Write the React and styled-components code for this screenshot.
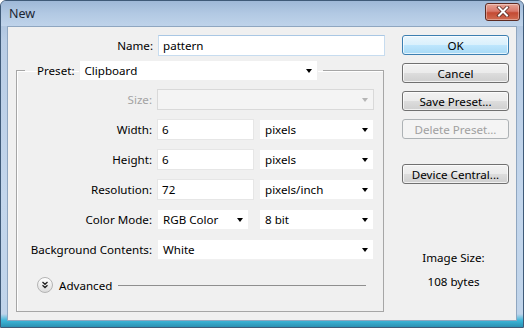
import React from 'react';
import styled, { createGlobalStyle } from 'styled-components';

const GlobalStyle = createGlobalStyle`
  html, body {
    margin: 0;
    padding: 0;
    background: #ffffff;
  }
  body {
    font-family: 'Noto Sans', 'Open Sans', sans-serif;
    font-size: 11.6px;
    color: #000000;
  }
`;

const Window = styled.div`
  width: 524px;
  height: 328px;
  box-sizing: border-box;
  display: flex;
  flex-direction: column;
  border: 1px solid #3f5a78;
  border-radius: 6px 6px 0 0;
  background: linear-gradient(to bottom, #a3bcd9 0%, #b9cde5 12%, #c3d6ec 60%, #c0d4ea 96%, #3cb6d8 98%, #2b90b2 100%);
  overflow: hidden;
`;

const TitleBar = styled.div`
  height: 25px;
  flex: none;
  display: flex;
  align-items: center;
  justify-content: space-between;
  padding: 0 3px 0 8px;
  background: linear-gradient(to bottom, #9eb8d7 0%, #b2c9e3 50%, #bfd3ea 100%);
  font-size: 12.5px;
  color: #1b2633;
`;

const CloseButton = styled.div`
  width: 33px;
  height: 16px;
  margin-top: -4px;
  border: 1px solid #5d2b22;
  border-radius: 3px;
  background: linear-gradient(to bottom, #e6a596 0%, #d8786a 45%, #c44a33 55%, #d06c52 100%);
  box-shadow: inset 0 0 0 1px rgba(255, 255, 255, 0.35);
  display: flex;
  align-items: center;
  justify-content: center;
`;

const Client = styled.div`
  flex: 1;
  margin: 0 6px 6px 6px;
  background: #f0f0f0;
  border: 1px solid #8fa6c0;
  display: flex;
`;

const Main = styled.div`
  width: 377px;
  flex: none;
  padding: 8px 0 0 8px;
  box-sizing: border-box;
`;

const NameRow = styled.div`
  display: flex;
  align-items: center;
  gap: 5px;
`;

const Label = styled.label`
  white-space: nowrap;
  color: ${(p) => (p.$disabled ? '#a3a3a3' : '#000000')};
  text-align: right;
  width: ${(p) => (p.$width ? `${p.$width}px` : 'auto')};
`;

const TextBox = styled.div`
  width: ${(p) => p.$width}px;
  height: 21px;
  box-sizing: border-box;
  background: #ffffff;
  border: 1px solid;
  border-color: ${(p) => (p.$focus ? '#a9c7e4 #c7dcef #c7dcef #c7dcef' : '#e6e6e6')};
  display: flex;
  align-items: center;
  padding-left: 4px;
`;

const Select = styled.div`
  width: ${(p) => (p.$width ? `${p.$width}px` : 'auto')};
  flex: ${(p) => (p.$width ? 'none' : '1')};
  height: 21px;
  box-sizing: border-box;
  background: ${(p) => (p.$disabled ? '#f4f4f4' : '#ffffff')};
  border: 1px solid ${(p) => (p.$disabled ? '#d9d9d9' : '#f0f0f0')};
  display: flex;
  align-items: center;
  justify-content: space-between;
  padding: 0 4px 0 5px;
`;

const Arrow = styled.span`
  width: 0;
  height: 0;
  border-left: 3.5px solid transparent;
  border-right: 3.5px solid transparent;
  border-top: 4px solid ${(p) => (p.$disabled ? '#b5b5b5' : '#000000')};
  margin-right: 1px;
`;

const Group = styled.fieldset`
  width: 368px;
  height: 252px;
  box-sizing: border-box;
  margin: 4px 0 0 0;
  padding: 0;
  border: 1px solid #a6a6a6;
  box-shadow: inset 1px 1px 0 #ffffff;
  min-inline-size: 0;
`;

const Legend = styled.legend`
  margin-left: 8px;
  padding: 0 5px 0 12px;
`;

const LegendInner = styled.div`
  display: flex;
  align-items: center;
  gap: 4px;
`;

const FormGrid = styled.div`
  display: grid;
  grid-template-columns: 135px 217px;
  column-gap: 5px;
  grid-auto-rows: 21px;
  row-gap: 9px;
  padding-top: 8px;
  align-items: center;
`;

const Pair = styled.div`
  display: flex;
  justify-content: space-between;
`;

const AdvancedRow = styled.div`
  display: flex;
  align-items: center;
  margin: 17px 17px 0 20px;
  gap: 6px;
`;

const RoundToggle = styled.div`
  width: 14px;
  height: 14px;
  border-radius: 50%;
  border: 1px solid #b4b4b4;
  background: linear-gradient(to bottom, #ffffff, #dcdcdc);
  display: flex;
  align-items: center;
  justify-content: center;
`;

const Rule = styled.div`
  flex: 1;
  height: 1px;
  background: #8f8f8f;
`;

const Side = styled.div`
  width: 107px;
  margin-left: 17px;
  padding-top: 8px;
  display: flex;
  flex-direction: column;
`;

const Button = styled.div`
  height: 20px;
  box-sizing: border-box;
  margin-top: ${(p) => p.$gap}px;
  border-radius: 3px;
  display: flex;
  align-items: center;
  justify-content: center;
  border: 1px solid ${(p) => (p.$default ? '#3c7fb1' : p.$disabled ? '#adb2b5' : '#707070')};
  color: ${(p) => (p.$disabled ? '#a0a0a0' : '#000000')};
  background: ${(p) =>
    p.$default
      ? 'linear-gradient(to bottom, #eaf6fd 0%, #d9f0fc 50%, #bee6fd 51%, #a7d9f5 100%)'
      : p.$disabled
      ? '#f4f4f4'
      : 'linear-gradient(to bottom, #f2f2f2 0%, #ebebeb 50%, #dddddd 51%, #cfcfcf 100%)'};
  box-shadow: inset 0 0 0 1px ${(p) => (p.$disabled ? '#f4f4f4' : 'rgba(255,255,255,0.7)')};
`;

const SizeInfo = styled.div`
  margin-top: 65px;
  display: flex;
  flex-direction: column;
  align-items: center;
  gap: 7px;
  line-height: 17px;
  padding-right: 4px;
`;

function ChevronDown() {
  return (
    <svg width='8' height='8' viewBox='0 0 8 8'>
      <path d='M1.5 1 L4 3.3 L6.5 1 M1.5 4.3 L4 6.6 L6.5 4.3' fill='none' stroke='#222' strokeWidth='1.3' />
    </svg>
  );
}

function CloseGlyph() {
  return (
    <svg width='14' height='11' viewBox='0 0 14 11'>
      <path d='M3 1.5 L11 9.5 M11 1.5 L3 9.5' stroke='#5a2a22' strokeWidth='3.6' strokeLinecap='square' />
      <path d='M3 1.5 L11 9.5 M11 1.5 L3 9.5' stroke='#ffffff' strokeWidth='2' strokeLinecap='square' />
    </svg>
  );
}

const rows = [
  { label: 'Width:', value: '6', unit: 'pixels' },
  { label: 'Height:', value: '6', unit: 'pixels' },
  { label: 'Resolution:', value: '72', unit: 'pixels/inch' },
];

function App() {
  return (
    <>
      <GlobalStyle />
      <Window>
        <TitleBar>
          <span>New</span>
          <CloseButton>
            <CloseGlyph />
          </CloseButton>
        </TitleBar>
        <Client>
          <Main>
            <NameRow>
              <Label $width={137}>Name:</Label>
              <TextBox $width={227} $focus>pattern</TextBox>
            </NameRow>
            <Group>
              <Legend>
                <LegendInner>
                  <Label>Preset:</Label>
                  <Select $width={239}>
                    Clipboard
                    <Arrow />
                  </Select>
                </LegendInner>
              </Legend>
              <FormGrid>
                <Label $disabled>Size:</Label>
                <Select $disabled>
                  <span />
                  <Arrow $disabled />
                </Select>
                {rows.map((r) => (
                  <React.Fragment key={r.label}>
                    <Label>{r.label}</Label>
                    <Pair>
                      <TextBox $width={97}>{r.value}</TextBox>
                      <Select $width={115}>
                        {r.unit}
                        <Arrow />
                      </Select>
                    </Pair>
                  </React.Fragment>
                ))}
                <Label>Color Mode:</Label>
                <Pair>
                  <Select $width={92}>
                    RGB Color
                    <Arrow />
                  </Select>
                  <Select $width={115}>
                    8 bit
                    <Arrow />
                  </Select>
                </Pair>
                <Label>Background Contents:</Label>
                <Select>
                  White
                  <Arrow />
                </Select>
              </FormGrid>
              <AdvancedRow>
                <RoundToggle>
                  <ChevronDown />
                </RoundToggle>
                <span>Advanced</span>
                <Rule />
              </AdvancedRow>
            </Group>
          </Main>
          <Side>
            <Button $default $gap={0}>OK</Button>
            <Button $gap={8}>Cancel</Button>
            <Button $gap={8}>Save Preset...</Button>
            <Button $disabled $gap={8}>Delete Preset...</Button>
            <Button $gap={25}>Device Central...</Button>
            <SizeInfo>
              <span>Image Size:</span>
              <span>108 bytes</span>
            </SizeInfo>
          </Side>
        </Client>
      </Window>
    </>
  );
}

export default App;
